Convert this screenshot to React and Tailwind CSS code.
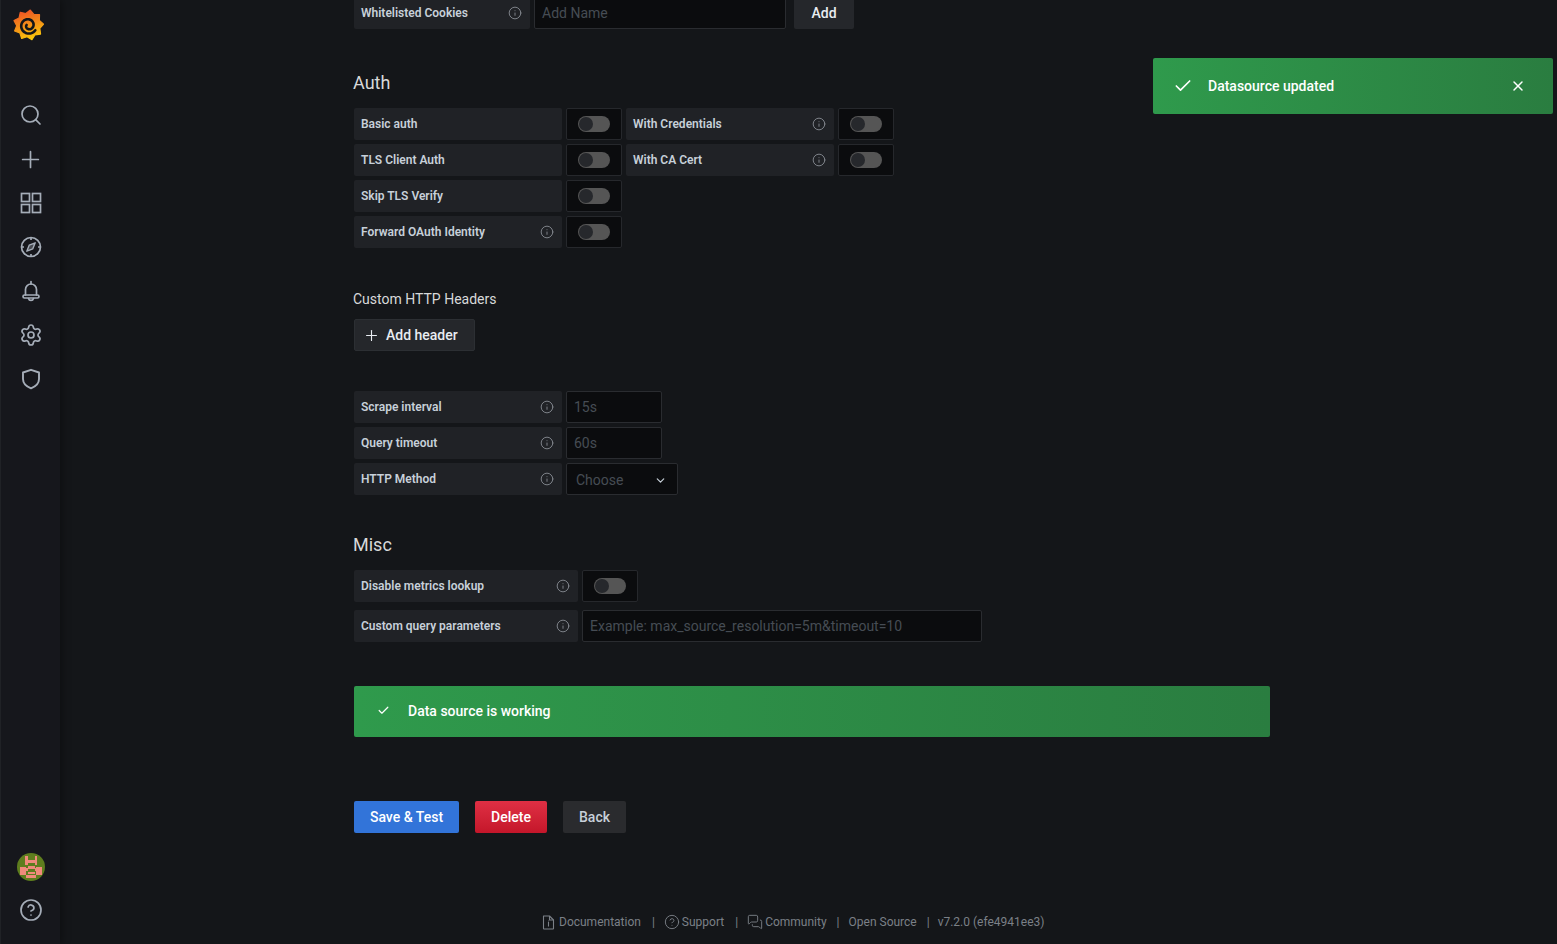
import React from "react";
import { Search, Plus, Settings, CircleHelp, Info, Check, X, ChevronDown, MessagesSquare } from "lucide-react";

function Logo() {
  const pts = [];
  const n = 9;
  for (let i = 0; i < n * 2; i++) {
    const a = (i / (n * 2)) * Math.PI * 2 - Math.PI / 2 + 0.12;
    const r = i % 2 === 0 ? 15.6 : 12.2;
    pts.push(`${(16 + r * Math.cos(a)).toFixed(2)},${(16 + r * Math.sin(a)).toFixed(2)}`);
  }
  const sp = [];
  for (let k = 0; k <= 60; k++) {
    const t = k / 60;
    const a = ((35 + t * 520) * Math.PI) / 180;
    const r = 8.6 - 6.6 * Math.pow(t, 1.4);
    sp.push(`${(16 + r * Math.cos(a)).toFixed(2)},${(16.5 + r * Math.sin(a)).toFixed(2)}`);
  }
  return (
    <svg width="31" height="32" viewBox="0 0 32 32">
      <defs>
        <linearGradient id="lg" x1="0.25" y1="0" x2="0.55" y2="1">
          <stop offset="0" stopColor="#ee4f26" />
          <stop offset="1" stopColor="#fbca0a" />
        </linearGradient>
      </defs>
      <polygon points={pts.join(" ")} fill="url(#lg)" strokeLinejoin="round" stroke="url(#lg)" strokeWidth="1.2" />
      <polyline points={sp.join(" ")} fill="none" stroke="#141619" strokeWidth="2.7" strokeLinecap="round" strokeLinejoin="round" />
    </svg>
  );
}

function Avatar() {
  const pink = [
    [4.5, 1.5, 1.5, 5.5], [10, 1.5, 1.5, 5.5], [6, 4, 4, 1.5], [6, 7.5, 4, 1.5],
    [1.5, 8, 3.5, 4.5], [11, 8, 3.5, 4.5], [5, 8.5, 1, 1.5], [10, 8.5, 1, 1.5],
    [6, 11, 4, 1], [5, 12.5, 6, 2], [1, 1, 1, 1], [14, 1, 1, 1],
  ];
  return (
    <svg width="28" height="28" viewBox="0 0 16 16" shapeRendering="crispEdges" className="rounded-full">
      <rect width="16" height="16" fill="#5e7d1e" />
      {pink.map((p, i) => (
        <rect key={i} x={p[0]} y={p[1]} width={p[2]} height={p[3]} fill="#f08a7c" />
      ))}
    </svg>
  );
}

const svgProps = { width: 24, height: 24, viewBox: "0 0 24 24", fill: "none", stroke: "currentColor", strokeWidth: 1.7 };

function GridIcon() {
  return (
    <svg {...svgProps}>
      <rect x="2.5" y="2.5" width="8" height="8" />
      <rect x="13.5" y="2.5" width="8" height="8" />
      <rect x="2.5" y="13.5" width="8" height="8" />
      <rect x="13.5" y="13.5" width="8" height="8" />
    </svg>
  );
}

function CompassIcon() {
  return (
    <svg {...svgProps}>
      <circle cx="12" cy="12" r="9.5" />
      <path d="M12 2.5v2.5M12 19v2.5M2.5 12H5M19 12h2.5" />
      <path d="M16.2 7.8l-2.4 6-6 2.4 2.4-6z" fill="currentColor" fillOpacity="0.35" strokeLinejoin="round" strokeWidth="1.4" />
    </svg>
  );
}

function BellIcon() {
  return (
    <svg {...svgProps} strokeLinecap="round">
      <path d="M12 2.5V5" />
      <path d="M6.5 16v-5.5a5.5 5.5 0 0 1 11 0V16" />
      <rect x="4" y="16" width="16" height="3" rx="1.5" />
      <path d="M9.5 19.5a2.6 2.6 0 0 0 5 0" />
    </svg>
  );
}

function ShieldIcon() {
  return (
    <svg {...svgProps} strokeWidth="1.9" strokeLinejoin="round">
      <path d="M12 2.8l8 2.7V12c0 4.6-3.6 7.6-8 9.4-4.4-1.8-8-4.8-8-9.4V5.5z" />
    </svg>
  );
}

function DocIcon() {
  return (
    <svg width="15" height="15" viewBox="0 0 15 15" fill="none" stroke="currentColor" strokeWidth="1.1" strokeLinejoin="round">
      <path d="M2.5 1h6l4 4v8.5a.5.5 0 0 1-.5.5H3a.5.5 0 0 1-.5-.5z" />
      <path d="M8.5 1v4h4" />
      <path d="M7.5 7v4.5M7 6h.8" />
    </svg>
  );
}

function NavItem({ children }) {
  return <div className="h-11 flex items-center justify-center text-[#a5adb8]">{children}</div>;
}

function Label({ text, width, info }) {
  return (
    <div className={`h-8 rounded-[2px] bg-[#202226] flex items-center justify-between pl-[7px] pr-[8px] text-xs font-semibold text-[#c7d0d9] ${width}`}>
      <span>{text}</span>
      {info && <Info size={14} strokeWidth={1.5} className="text-[#8a8f96]" />}
    </div>
  );
}

function Toggle() {
  return (
    <div className="h-8 w-14 rounded-[2px] bg-[#0b0c0e] border border-[#26282c] flex items-center justify-center">
      <div className="w-8 h-4 rounded-full bg-[#555555] flex items-center pl-[1px]">
        <div className="w-[14px] h-[14px] rounded-full bg-[#26282c]" />
      </div>
    </div>
  );
}

function Input({ text, width }) {
  return (
    <div className={`h-8 rounded-[2px] bg-[#0b0c0e] border border-[#2a2c30] flex items-center pl-[7px] text-sm text-[#464c54] ${width}`}>
      {text}
    </div>
  );
}

function AuthRow({ label, info, second, secondInfo }) {
  return (
    <div className="flex gap-1">
      <Label text={label} info={info} width="w-[208px]" />
      <Toggle />
      {second && <Label text={second} info={secondInfo} width="w-[208px]" />}
      {second && <Toggle />}
    </div>
  );
}

function FormRow({ label, text, width = "w-24" }) {
  return (
    <div className="flex gap-1">
      <Label text={label} info width="w-[208px]" />
      <Input text={text} width={width} />
    </div>
  );
}

export default function App() {
  return (
    <div className="h-[944px] w-full overflow-hidden flex bg-[#141619] font-['Roboto',sans-serif] relative">
      <aside className="w-[60px] shrink-0 h-full bg-[#16171c] border-l border-[#202226] flex flex-col shadow-[2px_0_8px_rgba(0,0,0,0.35)] z-10">
        <div className="h-[93px] flex justify-center pt-[9px] pr-[4px]">
          <div className="h-8"><Logo /></div>
        </div>
        <NavItem><Search size={24} strokeWidth={1.7} /></NavItem>
        <NavItem><Plus size={27} strokeWidth={1.5} /></NavItem>
        <NavItem><GridIcon /></NavItem>
        <NavItem><CompassIcon /></NavItem>
        <NavItem><BellIcon /></NavItem>
        <NavItem><Settings size={24} strokeWidth={1.7} /></NavItem>
        <NavItem><ShieldIcon /></NavItem>
        <div className="mt-auto pb-3 flex flex-col items-center">
          <div className="h-[43px] flex items-center"><Avatar /></div>
          <div className="h-11 flex items-center text-[#a5adb8]"><CircleHelp size={24} strokeWidth={1.7} /></div>
        </div>
      </aside>

      <main className="flex-1 min-w-0 flex flex-col pl-[294px] mt-[-3px]">
        <div className="w-[916px]">
          <div className="flex">
            <Label text="Whitelisted Cookies" info width="w-[176px]" />
            <div className="ml-1"><Input text="Add Name" width="w-[252px]" /></div>
            <div className="ml-2 w-[60px] h-8 rounded-[2px] bg-[#25272b] flex items-center justify-center text-sm font-medium text-[#e9edf2]">Add</div>
          </div>

          <h3 className="mt-[42px] -ml-px h-6 leading-6 text-lg text-[#d8d9da]">Auth</h3>
          <div className="mt-[13px] flex flex-col gap-1">
            <AuthRow label="Basic auth" second="With Credentials" secondInfo />
            <AuthRow label="TLS Client Auth" second="With CA Cert" secondInfo />
            <AuthRow label="Skip TLS Verify" />
            <AuthRow label="Forward OAuth Identity" info />
          </div>

          <h6 className="mt-[41px] -ml-px h-5 leading-5 text-sm text-[#d8d9da]">Custom HTTP Headers</h6>
          <div className="mt-[10px] h-8 w-[121px] rounded-[2px] bg-[#25272b] border border-[#2c2f33] flex items-center pl-[8px] gap-[6px] text-sm font-medium text-[#e9edf2]">
            <Plus size={17} strokeWidth={1.6} />
            Add header
          </div>

          <div className="mt-10 flex flex-col gap-1">
            <FormRow label="Scrape interval" text="15s" />
            <FormRow label="Query timeout" text="60s" />
            <div className="flex gap-1">
              <Label text="HTTP Method" info width="w-[208px]" />
              <div className="h-8 w-28 rounded-[2px] bg-[#0b0c0e] border border-[#2a2c30] flex items-center justify-between pl-[9px] pr-[10px] pt-[2px] text-sm text-[#464c54]">
                Choose
                <ChevronDown size={13} strokeWidth={2.2} className="text-[#c7d0d9]" />
              </div>
            </div>
          </div>

          <h3 className="mt-[38px] -ml-px h-6 leading-6 text-lg text-[#d8d9da]">Misc</h3>
          <div className="mt-[13px] flex flex-col gap-2">
            <div className="flex gap-1">
              <Label text="Disable metrics lookup" info width="w-[224px]" />
              <Toggle />
            </div>
            <div className="flex gap-1">
              <Label text="Custom query parameters" info width="w-[224px]" />
              <Input text="Example: max_source_resolution=5m&timeout=10" width="w-[400px]" />
            </div>
          </div>

          <div className="mt-11 h-[51px] rounded-[2px] bg-gradient-to-r from-[#2f9a4c] to-[#2a7d40] flex items-center pl-[23px] pb-[2px] text-sm font-medium text-white">
            <Check size={13} strokeWidth={2.2} />
            <span className="ml-[18px]">Data source is working</span>
          </div>

          <div className="mt-16 flex gap-4">
            <div className="h-8 w-[105px] rounded-[2px] bg-[#3274d9] flex items-center justify-center text-sm font-medium text-white">Save &amp; Test</div>
            <div className="h-8 w-[72px] rounded-[2px] bg-gradient-to-b from-[#e02f44] to-[#c4162a] flex items-center justify-center text-sm font-medium text-white">Delete</div>
            <div className="h-8 w-[63px] rounded-[2px] bg-[#2a2b2e] flex items-center justify-center text-sm font-medium text-[#c7d0d9]">Back</div>
          </div>
        </div>

        <footer className="mt-[81px] ml-[187px] flex items-center text-xs text-[#7b8087]">
          <span className="flex items-center gap-[3px]"><DocIcon />Documentation</span>
          <span className="ml-[11px] mr-[9px]">|</span>
          <span className="flex items-center gap-[2px]"><CircleHelp size={16} strokeWidth={1.4} />Support</span>
          <span className="ml-[11px] mr-[9px]">|</span>
          <span className="flex items-center gap-[2px]"><MessagesSquare size={16} strokeWidth={1.4} />Community</span>
          <span className="ml-[10px] mr-[9px]">|</span>
          <span>Open Source</span>
          <span className="ml-[10px] mr-[8px]">|</span>
          <span>v7.2.0 (efe4941ee3)</span>
        </footer>
      </main>

      <div className="absolute left-[1153px] top-[58px] w-[400px] h-14 rounded-[2px] bg-gradient-to-r from-[#2f9a4c] to-[#2a7d40] flex items-center pl-[20px] pr-[27px] text-sm font-medium text-white z-20">
        <Check size={20} strokeWidth={2} />
        <span className="ml-[15px] flex-1">Datasource updated</span>
        <X size={16} strokeWidth={2.2} />
      </div>
    </div>
  );
}
